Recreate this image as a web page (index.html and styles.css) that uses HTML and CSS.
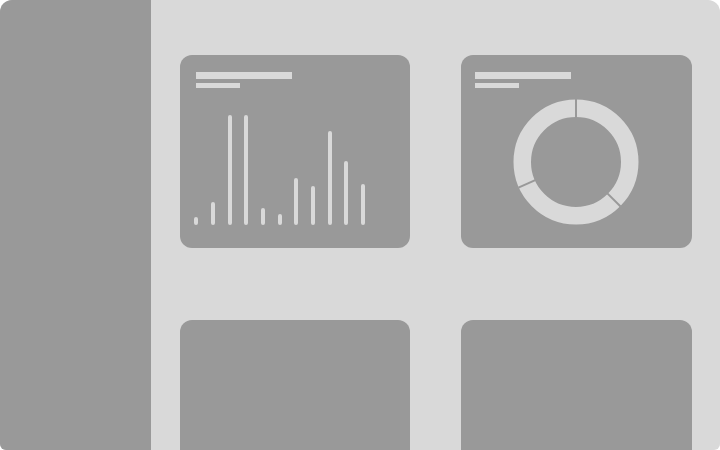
FILE: index.html
```html
<!DOCTYPE html>
<html lang="en">
<head>
<meta charset="utf-8">
<title>Dashboard wireframe</title>
<link rel="stylesheet" href="styles.css">
</head>
<body>
<div class="frame">
  <aside class="sidebar"></aside>
  <main class="content">
    <section class="card card-bars">
      <div class="title-line long"></div>
      <div class="title-line short"></div>
      <div class="bars">
        <span class="bar" style="height:8px"></span>
        <span class="bar" style="height:23.5px"></span>
        <span class="bar" style="height:110px"></span>
        <span class="bar" style="height:110px"></span>
        <span class="bar" style="height:17.5px"></span>
        <span class="bar" style="height:11.5px"></span>
        <span class="bar" style="height:47px"></span>
        <span class="bar" style="height:39.5px"></span>
        <span class="bar" style="height:94.5px"></span>
        <span class="bar" style="height:64px"></span>
        <span class="bar" style="height:41.5px"></span>
      </div>
    </section>
    <section class="card card-donut">
      <div class="title-line long"></div>
      <div class="title-line short"></div>
      <svg class="donut" width="126" height="126" viewBox="0 0 126 126" aria-hidden="true">
        <circle cx="63" cy="63" r="53.75" fill="none" stroke="#d9d9d9" stroke-width="17.5"/>
        <g stroke="#999999" stroke-width="2">
          <line x1="63" y1="0" x2="63" y2="19"/>
          <line x1="63" y1="0" x2="63" y2="19" transform="rotate(135 63 63)"/>
          <line x1="63" y1="0" x2="63" y2="19" transform="rotate(246 63 63)"/>
        </g>
      </svg>
    </section>
    <section class="card"></section>
    <section class="card"></section>
  </main>
</div>
</body>
</html>
```
FILE: styles.css
```css
html, body {
  margin: 0;
  padding: 0;
  background: #ffffff;
  overflow: hidden;
}

.frame {
  width: 720px;
  height: 450px;
  display: flex;
  background: #d9d9d9;
  border-radius: 12px 12px 6px 6px;
  overflow: hidden;
}

.sidebar {
  width: 151px;
  flex: 0 0 151px;
  background: #999999;
}

.content {
  flex: 1;
  padding: 55px 28px 0 29px;
  display: grid;
  grid-template-columns: 230px 231px;
  grid-auto-rows: 193px;
  column-gap: 51px;
  row-gap: 72px;
  align-content: start;
}

.card {
  background: #999999;
  border-radius: 12px;
  padding: 17px 16px 0;
  box-sizing: border-box;
  display: flex;
  flex-direction: column;
  align-items: flex-start;
}

.card-donut {
  padding-left: 14px;
}

.title-line {
  background: #d9d9d9;
}

.title-line.long {
  width: 96px;
  height: 7px;
}

.title-line.short {
  width: 44px;
  height: 5px;
  margin-top: 4px;
}

.bars {
  display: flex;
  align-items: flex-end;
  gap: 12.67px;
  height: 137px;
  margin-left: -1.7px;
}

.bar {
  width: 4px;
  background: #d9d9d9;
  border-radius: 2px;
}

.donut {
  display: block;
  margin-top: 10.5px;
  margin-left: 37.5px;
}
```
